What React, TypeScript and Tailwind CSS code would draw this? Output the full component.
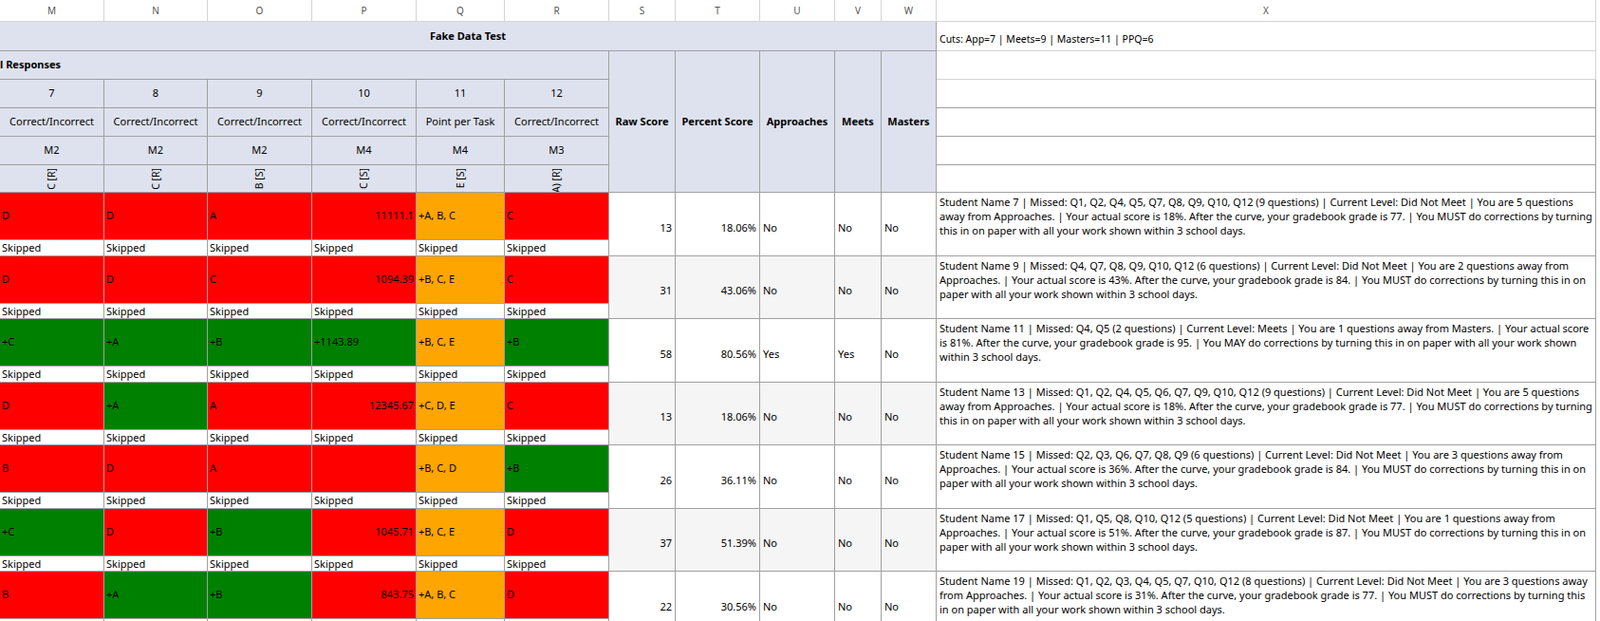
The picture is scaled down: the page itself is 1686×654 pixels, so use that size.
const F = "[font-family:'Liberation_Sans',Arial,sans-serif]";

type Cell = { v: string; c: "r" | "g" | "o"; right?: boolean };
const bg = { r: "bg-[#ff0000]", g: "bg-[#008000]", o: "bg-[#ffa500]" };

const rows: { cells: Cell[]; raw: string; pct: string; app: string; meets: string; text: string }[] = [
  {
    cells: [{ v: "D", c: "r" }, { v: "D", c: "r" }, { v: "A", c: "r" }, { v: "11111.1", c: "r", right: true }, { v: "+A, B, C", c: "o" }, { v: "C", c: "r" }],
    raw: "13", pct: "18.06%", app: "No", meets: "No",
    text: "Student Name 7 | Missed: Q1, Q2, Q4, Q5, Q7, Q8, Q9, Q10, Q12 (9 questions) | Current Level: Did Not Meet | You are 5 questions away from Approaches. | Your actual score is 18%. After the curve, your gradebook grade is 77. | You MUST do corrections by turning this in on paper with all your work shown within 3 school days.",
  },
  {
    cells: [{ v: "D", c: "r" }, { v: "D", c: "r" }, { v: "C", c: "r" }, { v: "1094.39", c: "r", right: true }, { v: "+B, C, E", c: "o" }, { v: "C", c: "r" }],
    raw: "31", pct: "43.06%", app: "No", meets: "No",
    text: "Student Name 9 | Missed: Q4, Q7, Q8, Q9, Q10, Q12 (6 questions) | Current Level: Did Not Meet | You are 2 questions away from Approaches. | Your actual score is 43%. After the curve, your gradebook grade is 84. | You MUST do corrections by turning this in on paper with all your work shown within 3 school days.",
  },
  {
    cells: [{ v: "+C", c: "g" }, { v: "+A", c: "g" }, { v: "+B", c: "g" }, { v: "+1143.89", c: "g" }, { v: "+B, C, E", c: "o" }, { v: "+B", c: "g" }],
    raw: "58", pct: "80.56%", app: "Yes", meets: "Yes",
    text: "Student Name 11 | Missed: Q4, Q5 (2 questions) | Current Level: Meets | You are 1 questions away from Masters. | Your actual score is 81%. After the curve, your gradebook grade is 95. | You MAY do corrections by turning this in on paper with all your work shown within 3 school days.",
  },
  {
    cells: [{ v: "D", c: "r" }, { v: "+A", c: "g" }, { v: "A", c: "r" }, { v: "12345.67", c: "r", right: true }, { v: "+C, D, E", c: "o" }, { v: "C", c: "r" }],
    raw: "13", pct: "18.06%", app: "No", meets: "No",
    text: "Student Name 13 | Missed: Q1, Q2, Q4, Q5, Q6, Q7, Q9, Q10, Q12 (9 questions) | Current Level: Did Not Meet | You are 5 questions away from Approaches. | Your actual score is 18%. After the curve, your gradebook grade is 77. | You MUST do corrections by turning this in on paper with all your work shown within 3 school days.",
  },
  {
    cells: [{ v: "B", c: "r" }, { v: "D", c: "r" }, { v: "A", c: "r" }, { v: "", c: "r" }, { v: "+B, C, D", c: "o" }, { v: "+B", c: "g" }],
    raw: "26", pct: "36.11%", app: "No", meets: "No",
    text: "Student Name 15 | Missed: Q2, Q3, Q6, Q7, Q8, Q9 (6 questions) | Current Level: Did Not Meet | You are 3 questions away from Approaches. | Your actual score is 36%. After the curve, your gradebook grade is 84. | You MUST do corrections by turning this in on paper with all your work shown within 3 school days.",
  },
  {
    cells: [{ v: "+C", c: "g" }, { v: "D", c: "r" }, { v: "+B", c: "g" }, { v: "1045.71", c: "r", right: true }, { v: "+B, C, E", c: "o" }, { v: "D", c: "r" }],
    raw: "37", pct: "51.39%", app: "No", meets: "No",
    text: "Student Name 17 | Missed: Q1, Q5, Q8, Q10, Q12 (5 questions) | Current Level: Did Not Meet | You are 1 questions away from Approaches. | Your actual score is 51%. After the curve, your gradebook grade is 87. | You MUST do corrections by turning this in on paper with all your work shown within 3 school days.",
  },
  {
    cells: [{ v: "B", c: "r" }, { v: "+A", c: "g" }, { v: "+B", c: "g" }, { v: "843.75", c: "r", right: true }, { v: "+A, B, C", c: "o" }, { v: "D", c: "r" }],
    raw: "22", pct: "30.56%", app: "No", meets: "No",
    text: "Student Name 19 | Missed: Q1, Q2, Q3, Q4, Q5, Q7, Q10, Q12 (8 questions) | Current Level: Did Not Meet | You are 3 questions away from Approaches. | Your actual score is 31%. After the curve, your gradebook grade is 77. | You MUST do corrections by turning this in on paper with all your work shown within 3 school days.",
  },
];

const cols = ["M", "N", "O", "P", "Q", "R", "S", "T", "U", "V", "W", "X"];
const qs = [
  { n: "7", t: "Correct/Incorrect", m: "M2", r: "A, C [R]" },
  { n: "8", t: "Correct/Incorrect", m: "M2", r: "A, C [R]" },
  { n: "9", t: "Correct/Incorrect", m: "M2", r: "A, B [S]" },
  { n: "10", t: "Correct/Incorrect", m: "M4", r: "A, C [S]" },
  { n: "11", t: "Point per Task", m: "M4", r: "A, E [S]" },
  { n: "12", t: "Correct/Incorrect", m: "M3", r: "(A) [R]" },
];

const hd = "bg-[#dee2ee] border-r border-b border-[#a0a0a0] flex items-center justify-center";

export default function App() {
  return (
    <div className={`${F} text-[11px] text-black bg-white w-[1686px] h-[654px] overflow-hidden`}>
      <div className="grid grid-cols-[110px_109px_110px_110px_93px_110px_70px_89px_79px_49px_58px_695px] grid-rows-[23px_31px_30px_30px_30px_30px_29px]">
        {/* column letters */}
        {cols.map((c) => (
          <div key={c} className="bg-white border-r border-b border-[#d4d4d4] flex items-center justify-center text-[10px] text-[#555]">
            {c}
          </div>
        ))}

        {/* title row */}
        <div className={`${hd} col-span-11 font-bold`}>Fake Data Test</div>
        <div className="border-r border-b border-[#d4d4d4] flex items-end pb-[3px] px-[3px] text-[10.5px]">
          Cuts: App=7 | Meets=9 | Masters=11 | PPQ=6
        </div>

        {/* responses row */}
        <div className={`${hd} col-span-6 !justify-start font-bold`}>l Responses</div>
        <div className={`${hd} row-span-5 font-bold`}>Raw Score</div>
        <div className={`${hd} row-span-5 font-bold`}>Percent Score</div>
        <div className={`${hd} row-span-5 font-bold`}>Approaches</div>
        <div className={`${hd} row-span-5 font-bold`}>Meets</div>
        <div className={`${hd} row-span-5 font-bold`}>Masters</div>
        <div className="border-r border-b border-[#d4d4d4]" />

        {qs.map((q) => <div key={"n" + q.n} className={hd}>{q.n}</div>)}
        <div className="border-r border-b border-[#a0a0a0]" />
        {qs.map((q) => <div key={"t" + q.n} className={hd}>{q.t}</div>)}
        <div className="border-r border-b border-[#a0a0a0]" />
        {qs.map((q) => <div key={"m" + q.n} className={hd}>{q.m}</div>)}
        <div className="border-r border-b border-[#a0a0a0]" />
        {qs.map((q) => (
          <div key={"r" + q.n} className="bg-[#dee2ee] border-r border-b border-[#a0a0a0] flex items-start justify-center overflow-hidden">
            <span className="[writing-mode:vertical-rl] rotate-180 whitespace-nowrap leading-none text-[10.5px] pb-[3px]">{q.r}</span>
          </div>
        ))}
        <div className="border-r border-b border-[#a0a0a0]" />
      </div>

      {rows.map((row, i) => (
        <div
          key={i}
          className="grid grid-cols-[110px_109px_110px_110px_93px_110px_70px_89px_79px_49px_58px_695px] grid-rows-[50px_16.5px]"
        >
          {row.cells.map((c, j) => (
            <div
              key={j}
              className={`${bg[c.c]} border-r border-b border-[#a0a0a0] flex items-center px-[2px] ${c.right ? "justify-end" : ""}`}
            >
              {c.v}
            </div>
          ))}
          {[row.raw, row.pct].map((v, j) => (
            <div key={"s" + j} className={`row-span-2 border-r border-b border-[#a0a0a0] flex items-center justify-end pt-[8px] px-[3px] ${i % 2 ? "bg-[#f5f5f5]" : "bg-white"}`}>
              {v}
            </div>
          ))}
          {[row.app, row.meets, "No"].map((v, j) => (
            <div key={"u" + j} className={`row-span-2 border-r border-b border-[#a0a0a0] flex items-center pt-[8px] px-[3px] ${i % 2 ? "bg-[#f5f5f5]" : "bg-white"}`}>
              {v}
            </div>
          ))}
          <div className="row-span-2 border-r border-b border-[#a0a0a0] px-[3px] pt-[2px] leading-[15px] text-[11px]">
            {row.text}
          </div>
          {row.cells.map((_, j) => (
            <div key={"k" + j} className="bg-white border-r border-b border-[#a0a0a0] flex items-center px-[2px] leading-none">
              Skipped
            </div>
          ))}
        </div>
      ))}
    </div>
  );
}
